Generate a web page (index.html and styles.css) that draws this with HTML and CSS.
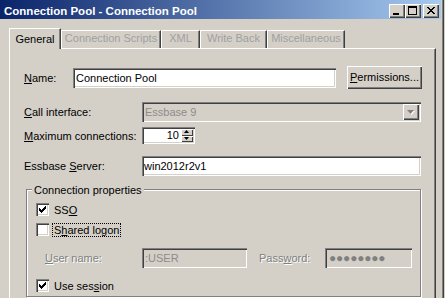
FILE: index.html
```html
<!DOCTYPE html>
<html lang="en">
<head>
<meta charset="UTF-8" />
<title>Connection Pool - Connection Pool</title>
<link rel="stylesheet" href="styles.css">
</head>
<body>
<div class="window">
  <div class="frame">

    <!-- Title bar -->
    <div class="titlebar">
      <span class="title">Connection Pool - Connection Pool</span>
      <div class="caption-btns">
        <div class="cap"><svg width="16" height="14"><rect x="4" y="9" width="6" height="2" fill="#000"/></svg></div>
        <div class="cap"><svg width="16" height="14"><path d="M3 2h9v9h-9z M4 4v6h7v-6z" fill="#000" fill-rule="evenodd"/></svg></div>
        <div class="cap close"><svg width="16" height="14"><path d="M4 3h2v1h-2z M10 3h2v1h-2z M5 4h2v1h-2z M9 4h2v1h-2z M6 5h4v1h-4z M7 6h2v1h-2z M6 7h4v1h-4z M5 8h2v1h-2z M9 8h2v1h-2z M4 9h2v1h-2z M10 9h2v1h-2z" fill="#000"/></svg></div>
      </div>
    </div>

    <!-- Tabs -->
    <div class="tabs">
      <div class="tab selected" style="width:52px">General</div>
      <div class="tab" style="width:100px">Connection Scripts</div>
      <div class="tab" style="width:39px">XML</div>
      <div class="tab" style="width:67px">Write Back</div>
      <div class="tab" style="width:78px">Miscellaneous</div>
    </div>

    <div class="panel">
      <div class="row name-row">
        <span class="lbl name-lbl"><u>N</u>ame:</span>
        <div class="edit name-edit">Connection Pool</div>
        <div class="btn perm-btn"><u>P</u>ermissions...</div>
      </div>

      <div class="row call-row">
        <span class="lbl wide-lbl"><u>C</u>all interface:</span>
        <div class="edit combo disabled">
          <span class="combo-text">Essbase 9</span>
          <div class="combo-btn">
            <svg width="12" height="12"><path d="M3 5h7l-3.5 4z" fill="#fff"/><path d="M2 4h7l-3.5 4z" fill="#808080"/></svg>
          </div>
        </div>
      </div>

      <div class="row max-row">
        <span class="lbl wide-lbl"><u>M</u>aximum connections:</span>
        <div class="edit spin">
          <span class="spin-text">10</span>
          <div class="spin-btns">
            <div class="spin-btn"><svg width="11" height="6"><path d="M3 4h5l-2.5-3z" fill="#000"/></svg></div>
            <div class="spin-btn"><svg width="11" height="5"><path d="M3 1h5l-2.5 3z" fill="#000"/></svg></div>
          </div>
        </div>
      </div>

      <div class="row server-row">
        <span class="lbl wide-lbl">Essbase <u>S</u>erver:</span>
        <div class="edit server-edit">win2012r2v1</div>
      </div>

      <div class="group">
        <div class="group-title">Connection properties</div>

        <div class="check-row first">
          <div class="checkbox"><svg width="7" height="7"><path d="M0 2h1v3h-1z M1 3h1v3h-1z M2 4h1v3h-1z M3 3h1v3h-1z M4 2h1v3h-1z M5 1h1v3h-1z M6 0h1v3h-1z" fill="#000"/></svg></div>
          <span class="check-lbl">SS<u>O</u></span>
        </div>

        <div class="check-row second">
          <div class="checkbox"></div>
          <span class="check-lbl focus">S<u>h</u>ared logon</span>
        </div>

        <div class="row user-row">
          <span class="lbl off user-lbl"><u>U</u>ser name:</span>
          <div class="edit disabled user-edit">:USER</div>
          <span class="lbl off pass-lbl">Pass<u>w</u>ord:</span>
          <div class="edit disabled pass-edit"><span class="dots">●●●●●●●●</span></div>
        </div>

        <div class="check-row last">
          <div class="checkbox"><svg width="7" height="7"><path d="M0 2h1v3h-1z M1 3h1v3h-1z M2 4h1v3h-1z M3 3h1v3h-1z M4 2h1v3h-1z M5 1h1v3h-1z M6 0h1v3h-1z" fill="#000"/></svg></div>
          <span class="check-lbl">Use ses<u>s</u>ion</span>
        </div>
      </div>
    </div>

  </div>
</div>
</body>
</html>
```

FILE: styles.css
```css
/* Page & window frame */
body {
  margin: 0;
  background: #d4d0c8;
  font-family: "Liberation Sans", Arial, sans-serif;
  font-size: 11px;
  color: #000;
  width: 445px;
  height: 298px;
  overflow: hidden;
}
.window {
  box-sizing: border-box;
  width: 444px;
  height: 298px;
  border-right: 1px solid #404040;
}
.frame {
  box-sizing: border-box;
  height: 100%;
  padding-right: 1px;
  border-right: 1px solid #808080;
}

/* Title bar */
.titlebar {
  height: 19px;
  background: linear-gradient(to right, #0a246a, #a6caf0);
  display: flex;
  align-items: flex-end;
  justify-content: space-between;
  padding-left: 4px;
}
.title {
  color: #fff;
  font-weight: bold;
  font-size: 11.5px;
  line-height: 13px;
  padding-bottom: 1px;
  white-space: nowrap;
}
.caption-btns {
  display: flex;
  margin: 0 2px 1px 0;
}
.cap {
  width: 16px;
  height: 14px;
  background: #d4d0c8;
  box-shadow: inset 1px 1px #fff, inset -1px -1px #404040, inset -2px -2px #808080;
}
.cap svg { display: block; }
.cap.close { margin-left: 2px; }

/* Tabs */
.tabs {
  display: flex;
  align-items: flex-end;
  height: 20px;
  margin-top: 9px;
  padding-left: 9px;
}
.tab {
  box-sizing: border-box;
  height: 18px;
  border-left: 1px solid #fff;
  border-top: 1px solid #fff;
  border-right: 1px solid #404040;
  box-shadow: inset -1px 0 #808080;
  color: #a0a0a0;
  text-align: center;
  line-height: 13px;
  padding-top: 1px;
  white-space: nowrap;
}
.tab.selected {
  height: 21px;
  margin-bottom: -1px;
  padding-top: 4px;
  color: #000;
  background: #d4d0c8;
  position: relative;
  z-index: 2;
}

/* Tab page */
.panel {
  box-sizing: border-box;
  width: 427px;
  height: 250px;
  margin-left: 9px;
  border-left: 1px solid #fff;
  border-top: 1px solid #fff;
  border-right: 1px solid #404040;
  box-shadow: inset -1px 0 #808080;
  padding: 17px 0 0 14px;
  overflow: hidden;
}
.row {
  display: flex;
  align-items: center;
}
.lbl {
  white-space: nowrap;
  flex: none;
}
.name-lbl { width: 49px; }
.wide-lbl { width: 118px; }
.lbl.off {
  color: #808080;
  text-shadow: 1px 1px 0 #fff;
}

/* Sunken edit box */
.edit {
  box-sizing: border-box;
  height: 20px;
  line-height: 20px;
  padding-left: 3px;
  background: #fff;
  box-shadow: inset 1px 1px #808080, inset 2px 2px #404040, inset -1px -1px #fff, inset -2px -2px #d4d0c8;
  white-space: nowrap;
  overflow: hidden;
  flex: none;
}
.edit.disabled {
  background: #d4d0c8;
  color: #8c8c8c;
}

/* Raised button */
.btn {
  box-sizing: border-box;
  height: 23px;
  line-height: 23px;
  text-align: center;
  background: #d4d0c8;
  box-shadow: inset 1px 1px #fff, inset -1px -1px #404040, inset -2px -2px #808080;
  flex: none;
}

.name-row { height: 23px; }
.name-edit { width: 263px; }
.perm-btn { width: 75px; margin-left: 11px; }

.call-row { margin-top: 13px; }
.combo {
  width: 279px;
  display: flex;
  justify-content: space-between;
  align-items: center;
  padding: 2px 2px 2px 3px;
  line-height: 16px;
}
.combo-btn {
  width: 16px;
  height: 16px;
  background: #d4d0c8;
  box-shadow: inset 1px 1px #fff, inset -1px -1px #404040, inset -2px -2px #808080;
  display: flex;
  align-items: center;
  justify-content: center;
}
.combo-btn svg { display: block; }

.max-row { margin-top: 5px; }
.spin {
  width: 53px;
  height: 17px;
  display: flex;
  padding: 2px;
  line-height: 13px;
}
.spin-text {
  flex: 1;
  text-align: right;
  padding-right: 2px;
}
.spin-btns {
  width: 12px;
  display: flex;
  flex-direction: column;
}
.spin-btn {
  height: 7px;
  background: #d4d0c8;
  box-shadow: inset 1px 1px #fff, inset -1px -1px #404040;
}
.spin-btn + .spin-btn { height: 6px; }
.spin-btn svg { display: block; }

.server-row { margin-top: 12px; }
.server-edit { width: 279px; padding-left: 2px; }

/* Group box */
.group {
  box-sizing: border-box;
  width: 395px;
  height: 108px;
  margin: 13px 0 0 2px;
  border: 1px solid #808080;
  box-shadow: inset 1px 1px #fff, 1px 1px 0 #fff;
  padding-left: 9px;
}
.group-title {
  width: max-content;
  margin: -6px 0 0 -4px;
  padding: 0 2px;
  line-height: 13px;
  background: #d4d0c8;
}
.check-row {
  display: flex;
  align-items: flex-start;
  height: 13px;
}
.check-row.first { margin-top: 6px; }
.check-row.second { margin-top: 7px; }
.check-row.last { margin-top: 11px; }
.checkbox {
  box-sizing: border-box;
  width: 13px;
  height: 13px;
  padding: 3px;
  background: #fff;
  box-shadow: inset 1px 1px #808080, inset 2px 2px #404040, inset -1px -1px #fff, inset -2px -2px #d4d0c8;
  flex: none;
}
.checkbox svg { display: block; }
.check-lbl {
  margin-left: 3px;
  padding: 0 1px;
  border: 1px solid transparent;
  line-height: 12px;
  white-space: nowrap;
}
.check-lbl.focus { border: 1px dotted #000; }

.user-row { margin-top: 12px; height: 20px; }
.user-lbl { width: 97px; margin-left: 9px; }
.user-edit { width: 105px; }
.pass-lbl { width: 66px; margin-left: 12px; }
.pass-edit { width: 87px; padding-left: 4px; }
.dots {
  color: #7f8080;
  font-size: 12px;
  letter-spacing: -0.2px;
}
```
